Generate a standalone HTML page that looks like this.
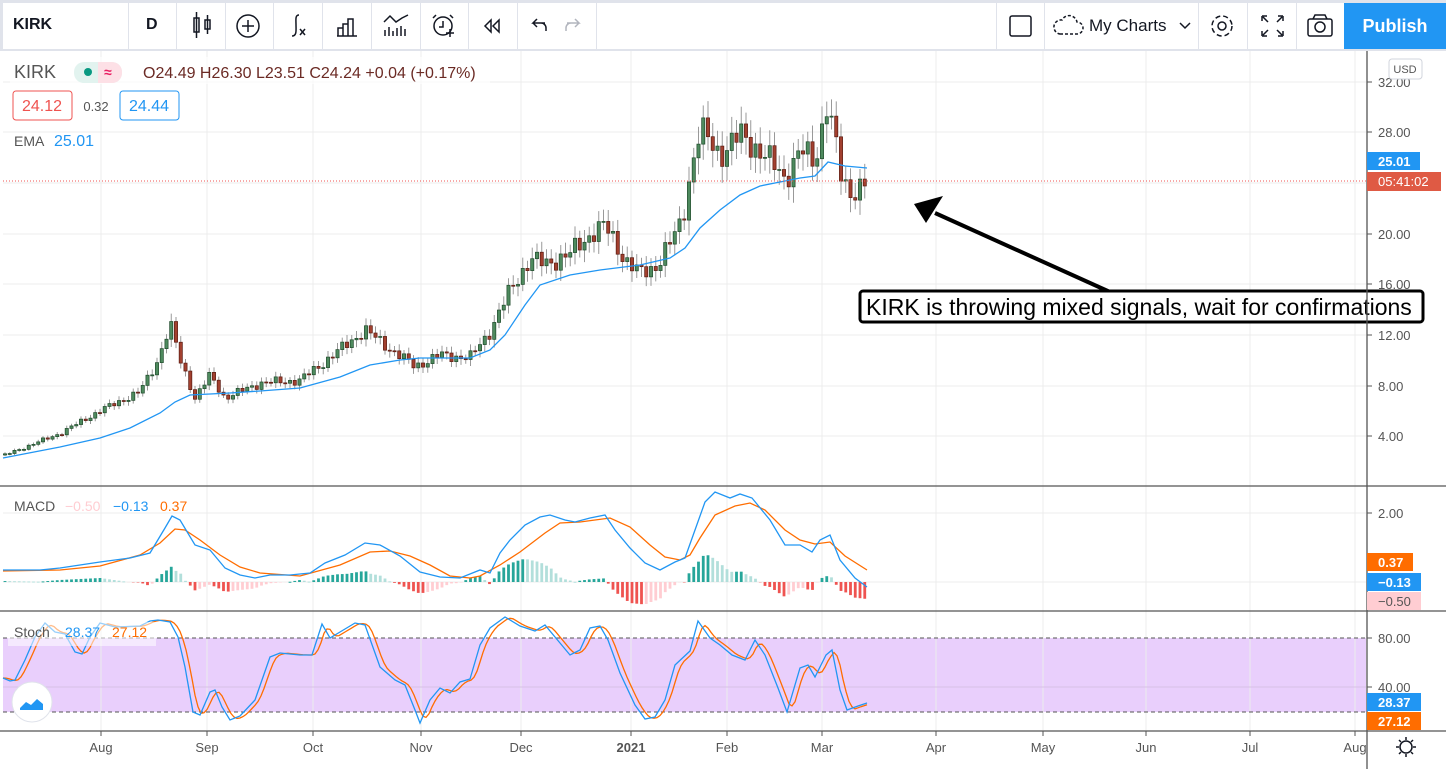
<!DOCTYPE html>
<html><head><meta charset="utf-8">
<style>
*{margin:0;padding:0;box-sizing:border-box}
body{width:1446px;height:769px;overflow:hidden;background:#fff;font-family:"Liberation Sans",sans-serif;position:relative}
.tb{position:absolute;left:0;top:0;width:1446px;height:51px;background:#fff;border-top:3px solid #e0e3eb;border-bottom:2px solid #e0e3eb;border-left:3px solid #e0e3eb}
.sep{position:absolute;top:3px;width:1px;height:46px;background:#e0e3eb}
.t{position:absolute;font-size:16px;color:#131722}
svg{position:absolute;left:0;top:0}
</style></head><body>
<div class="tb"></div>
<div class="t" style="left:13px;top:16px;font-weight:bold;font-size:16px">KIRK</div>
<div class="t" style="left:146px;top:16px;font-weight:bold">D</div>
<div class="t" style="left:1089px;top:16px;font-size:17px">My Charts</div>
<div style="position:absolute;left:1344px;top:3px;width:102px;height:46px;background:#2196f3;color:#fff;font-size:18px;font-weight:bold;text-align:center;line-height:46px">Publish</div>
<div class="sep" style="left:128px"></div><div class="sep" style="left:176px"></div><div class="sep" style="left:225px"></div><div class="sep" style="left:273px"></div><div class="sep" style="left:322px"></div><div class="sep" style="left:371px"></div><div class="sep" style="left:420px"></div><div class="sep" style="left:468px"></div><div class="sep" style="left:517px"></div><div class="sep" style="left:596px"></div>
<div class="sep" style="left:996px"></div><div class="sep" style="left:1044px"></div><div class="sep" style="left:1198px"></div><div class="sep" style="left:1247px"></div><div class="sep" style="left:1296px"></div>
<svg id="c" width="1446" height="769" style="top:0"></svg>
<svg width="1446" height="51" style="top:0" fill="none" stroke="#131722" stroke-width="1.5">
<rect x="194" y="18" width="5" height="14"/><line x1="196.5" y1="12" x2="196.5" y2="38"/><rect x="205" y="20" width="5" height="9"/><line x1="207.5" y1="15" x2="207.5" y2="34"/>
<circle cx="248" cy="26" r="11"/><line x1="242" y1="26" x2="254" y2="26"/><line x1="248" y1="20" x2="248" y2="32"/>
<path d="M299 15c-4 0-3 5-3 10s1 11-4 11"/><path d="M300 29l5 6M305 29l-5 6"/>
<path d="M337 36h20M338 36v-8h5v8M343 36v-12h5v12M348 36v-17h5v17"/>
<path d="M384 22l6-6 6 6 6-4 6-3M385 36v-6M389 36v-9M393 36v-5M397 36v-8M401 36v-10M405 36v-7"/>
<circle cx="443" cy="26" r="9"/><path d="M443 21v6h-4M436 15l-3 3M450 15l3 3M446 33h8M450 29v8"/>
<path d="M491 20l-6 6 6 6zM499 20l-6 6 6 6z"/>
<path d="M545 23h-12l4-4M533 23l4 4M533 23h8a5 5 0 0 1 5 5v3"/>
<path stroke="#b2b5be" d="M567 23h12l-4-4M579 23l-4 4M579 23h-8a5 5 0 0 0-5 5v3"/>
<rect x="1010" y="16" width="21" height="20" rx="2"/>
<path stroke-dasharray="3 2" d="M1060 34h17a6 6 0 0 0 0-12 8 8 0 0 0-15-2 7 7 0 0 0-2 14z"/>
<path d="M1180 23l5 5 5-5"/>
<circle cx="1222" cy="26" r="4"/><circle cx="1222" cy="26" r="10" stroke-dasharray="5 3"/>
<path d="M1262 16v5M1262 16h5M1283 16v5M1283 16h-5M1262 36v-5M1262 36h5M1283 36v-5M1283 36h-5M1263 17l5 5M1282 17l-5 5M1263 35l5-5M1282 35l-5-5"/>
<rect x="1308" y="19" width="24" height="17" rx="2"/><circle cx="1320" cy="27" r="5"/><path d="M1313 19l2-4h10l2 4"/>
</svg>
<script>
var S=document.getElementById('c'),h='';
function L(x1,y1,x2,y2,c,w,d){h+='<line x1="'+x1+'" y1="'+y1+'" x2="'+x2+'" y2="'+y2+'" stroke="'+c+'" stroke-width="'+(w||1)+'"'+(d?' stroke-dasharray="'+d+'"':'')+'/>';}
function R(x,y,w,hh,c,st){h+='<rect x="'+x+'" y="'+y+'" width="'+w+'" height="'+hh+'" fill="'+c+'"'+(st?' stroke="'+st+'" stroke-width="0.7"':'')+'/>';}
function T(x,y,s,c,sz,a,b){h+='<text x="'+x+'" y="'+y+'" fill="'+c+'" font-size="'+(sz||13)+'" font-family="Liberation Sans,sans-serif"'+(a?' text-anchor="'+a+'"':'')+(b?' font-weight="bold"':'')+'>'+s+'</text>';}
function P(pts,c,w){h+='<polyline fill="none" stroke="'+c+'" stroke-width="'+(w||1.3)+'" points="'+pts.map(function(p){return p.join(',')}).join(' ')+'"/>';}
function interp(pts,x){if(x<=pts[0][0])return pts[0][1];for(var i=1;i<pts.length;i++){if(x<=pts[i][0]){var a=pts[i-1],b=pts[i];return a[1]+(b[1]-a[1])*(x-a[0])/(b[0]-a[0]);}}return pts[pts.length-1][1];}
R(3,638,1363,74,'#e9cffc');
var mx=[101,207,313,421,521,631,727,822,936,1043,1146,1250,1355];
mx.forEach(function(x){L(x,51,x,730,'#ececec',1)});
[82,132,183,234,284,335,386,436].forEach(function(y){L(3,y,1366,y,'#ececec')});
L(3,513,1366,513,'#ececec');L(3,582,1366,582,'#ececec');L(3,687,1366,687,'#d7c1e6');
L(3,638,1366,638,'#555','1','4 3');L(3,712,1366,712,'#555','1','4 3');
var kp=[[5,2.5],[60,4.2],[100,6],[140,7.5],[158,10],[165,11.8],[172,12.6],[180,10],[188,8.5],[195,7],[210,8.8],[225,7],[260,8.2],[300,8.4],[330,10.2],[365,12.4],[385,11.2],[415,9.5],[440,10.4],[470,10.2],[490,12.3],[510,15.5],[530,18],[545,17.6],[570,18.4],[595,20.3],[605,20.6],[625,18],[640,16.8],[655,17.4],[670,19.2],[682,21],[690,24.7],[700,28.2],[720,26.3],[740,27.8],[760,26.6],[785,24.4],[800,26.6],[815,25.6],[822,28.5],[827,30.5],[835,27.4],[842,24],[850,23.3],[867,24.2]];
function py(p){return 486.6-p*12.64;}
var prev=interp(kp,0),n=0;
for(var x=5;x<=867;x+=4.75){n++;var base=interp(kp,x);var nz=Math.sin(n*2.3)*0.03*base+Math.sin(n*0.9)*0.02*base;var c=base+nz;var o=prev;var hi=Math.max(o,c)+base*(0.03+0.02*Math.abs(Math.sin(n*1.7)));var lo=Math.min(o,c)-base*(0.03+0.02*Math.abs(Math.cos(n*1.3)));
L(x,py(hi),x,py(lo),'#999',1);var up=c>=o;var t=py(Math.max(o,c)),b=py(Math.min(o,c));R(x-1.6,t,3.2,Math.max(1,b-t),up?'#4e8a5e':'#a2402f',up?'#1e4a2a':'#5a1a10');prev=c;}
P([[3,458],[60,447],[100,438],[130,428],[160,413],[175,402],[190,395],[230,393],[260,391],[300,388],[340,377],[370,365],[400,360],[420,358],[470,358],[490,350],[505,335],[525,305],[540,285],[570,275],[600,270],[640,265],[670,258],[685,248],[700,228],[720,210],[740,195],[760,186],[780,182],[800,178],[815,176],[828,162],[845,166],[867,168]],'#2196f3',1.3);
L(3,181,1366,181,'#ef5350',1,'1 2');
h+='<line x1="1110" y1="292" x2="935" y2="213" stroke="#000" stroke-width="4"/><polygon points="914,204 943,196 926,223" fill="#000"/>';
h+='<rect x="860" y="291" width="563" height="31" rx="3" fill="#fff" stroke="#000" stroke-width="3"/>';
T(866,315,'KIRK is throwing mixed signals, wait for confirmations','#000',23);
var bl=[[3,570],[40,570],[60,568],[100,562],[130,558],[150,553],[165,528],[172,516],[180,520],[195,545],[210,550],[225,568],[240,575],[255,578],[270,575],[290,575],[310,573],[325,563],[345,555],[365,543],[380,545],[400,556],[420,572],[440,577],[460,578],[480,570],[490,573],[500,553],[510,540],[525,525],[540,517],[550,515],[565,520],[575,522],[590,518],[605,515],[615,530],[630,548],[645,563],[660,570],[675,562],[685,558],[695,530],[705,502],[715,492],[730,498],[740,494],[752,498],[770,520],[785,545],[800,545],[812,552],[820,540],[830,535],[840,560],[855,578],[867,587]];
var or=[[3,571],[60,570],[100,566],[140,555],[160,543],[175,529],[185,530],[200,540],[220,555],[240,567],[260,573],[300,576],[340,565],[370,552],[390,551],[410,556],[430,565],[450,576],[470,578],[480,576],[500,565],[520,552],[545,533],[560,523],[580,522],[610,518],[630,527],[650,545],[665,557],[680,560],[690,555],[700,538],[715,515],[735,506],[750,503],[765,510],[785,530],[800,540],[815,544],[830,542],[845,556],[867,570]];
var pv=0;for(var x=5;x<=867;x+=4.75){var v=interp(or,x)-interp(bl,x);var col=v>=0?(v>=pv?'#26a69a':'#b2dfdb'):(v<pv?'#ef5350':'#ffcdd2');if(v>=0)R(x-1.4,582-v,2.8,Math.max(1,v),col);else R(x-1.4,582,2.8,-v,col);pv=v;}
P(or,'#ff6d00',1.3);P(bl,'#2196f3',1.3);
var K=[[3,678],[10,681],[15,680],[25,660],[35,637],[45,623],[55,632],[65,634],[75,652],[82,654],[90,637],[100,623],[115,627],[140,626],[150,621],[158,620],[170,622],[178,637],[185,667],[193,712],[200,715],[210,692],[215,690],[222,707],[230,720],[240,716],[255,700],[270,657],[280,653],[300,655],[312,655],[322,624],[330,638],[340,632],[355,623],[365,625],[380,667],[395,680],[405,685],[415,710],[420,723],[430,700],[440,688],[450,693],[460,682],[470,679],[480,645],[490,628],[505,617],[520,626],[535,631],[545,625],[555,637],[570,655],[580,650],[590,628],[600,626],[608,640],[620,673],[635,705],[645,719],[655,717],[665,700],[675,665],[690,651],[698,621],[710,638],[720,645],[732,655],[745,660],[755,640],[765,655],[778,688],[787,712],[800,668],[808,665],[815,677],[826,655],[832,650],[840,690],[847,710],[858,706],[867,703]];
var D=[];for(var x=3;x<=867;x+=3){D.push([x,((interp(K,x-2)+interp(K,x-5)+interp(K,x-8))/3).toFixed(1)]);}
P(D,'#ff6d00',1.3);P(K,'#2196f3',1.3);
L(0,486,1446,486,'#555',1.3);L(0,611,1446,611,'#555',1.3);L(0,731,1446,731,'#555',1.3);L(1367,51,1367,769,'#555',1.3);
[['32.00',82],['28.00',132],['20.00',234],['16.00',284],['12.00',335],['8.00',386],['4.00',436],['2.00',513],['80.00',638],['40.00',687]].forEach(function(a){L(1367,a[1],1372,a[1],'#555');T(1378,a[1]+5,a[0],'#555',13);});
h+='<rect x="1389" y="59" width="33" height="20" rx="3" fill="#fff" stroke="#d1d4dc"/>';T(1405,73,'USD','#555',11,'middle');
R(1367,152,53,18,'#2196f3');T(1378,166,'25.01','#fff',13,null,1);
R(1367,172,74,19,'#df5a44');T(1378,186,'05:41:02','#fff',13);
R(1367,553,46,18,'#ff6d00');T(1378,567,'0.37','#fff',13,null,1);
R(1367,573,54,18,'#2196f3');T(1378,587,'−0.13','#fff',13,null,1);
R(1367,592,54,18,'#ffcdd2');T(1378,606,'−0.50','#555',13);
R(1367,693,54,18,'#2196f3');T(1378,707,'28.37','#fff',13,null,1);
R(1367,712,54,18,'#ff6d00');T(1378,726,'27.12','#fff',13,null,1);
mx.forEach(function(x,i){var lb=['Aug','Sep','Oct','Nov','Dec','2021','Feb','Mar','Apr','May','Jun','Jul','Aug'][i];L(x,731,x,736,'#555');T(x,752,lb,'#555',13,'middle',lb=='2021');});
h+='<g fill="none" stroke="#131722" stroke-width="1.5"><circle cx="1406" cy="747" r="6"/><path d="M1406 737v3M1406 754v3M1396 747h3M1413 747h3M1399 740l2 2M1411 752l2 2M1413 740l-2 2M1399 754l2-2"/></g>';
R(10,57,480,27,'rgba(255,255,255,0.7)');
T(14,78,'KIRK','#555',18);
h+='<rect x="74" y="62" width="48" height="21" rx="10" fill="#e2f3ef"/><rect x="98" y="62" width="24" height="21" rx="10" fill="#fde0e6"/><rect x="98" y="62" width="10" height="21" fill="#fde0e6"/><circle cx="88" cy="72" r="4" fill="#089981"/>';
T(104,77,'≈','#e91e63',14,null,1);
T(143,78,'O24.49 H26.30 L23.51 C24.24 +0.04 (+0.17%)','#6b2a24',16);
h+='<rect x="13" y="91" width="59" height="29" rx="3" fill="#fff" stroke="#ef5350"/><rect x="120" y="91" width="59" height="29" rx="3" fill="#fff" stroke="#2196f3"/>';
T(42,111,'24.12','#ef5350',16,'middle');T(96,111,'0.32','#555',13,'middle');T(149,111,'24.44','#2196f3',16,'middle');
T(14,146,'EMA','#555',14);T(54,146,'25.01','#2196f3',16);
T(14,511,'MACD','#555',14);T(65,511,'−0.50','#ffcdd2',14);T(113,511,'−0.13','#2196f3',14);T(160,511,'0.37','#ff6d00',14);
R(8,622,148,24,'rgba(255,255,255,0.55)');
T(14,637,'Stoch','#555',14);T(65,637,'28.37','#2196f3',14);T(112,637,'27.12','#ff6d00',14);
h+='<circle cx="32" cy="702" r="20" fill="#fff" stroke="#e0e3eb"/><path d="M20 708l6-6 5 3 6-6 6 5v6h-23z" fill="#2196f3"/>';
S.innerHTML=h;
</script>
</body></html>
